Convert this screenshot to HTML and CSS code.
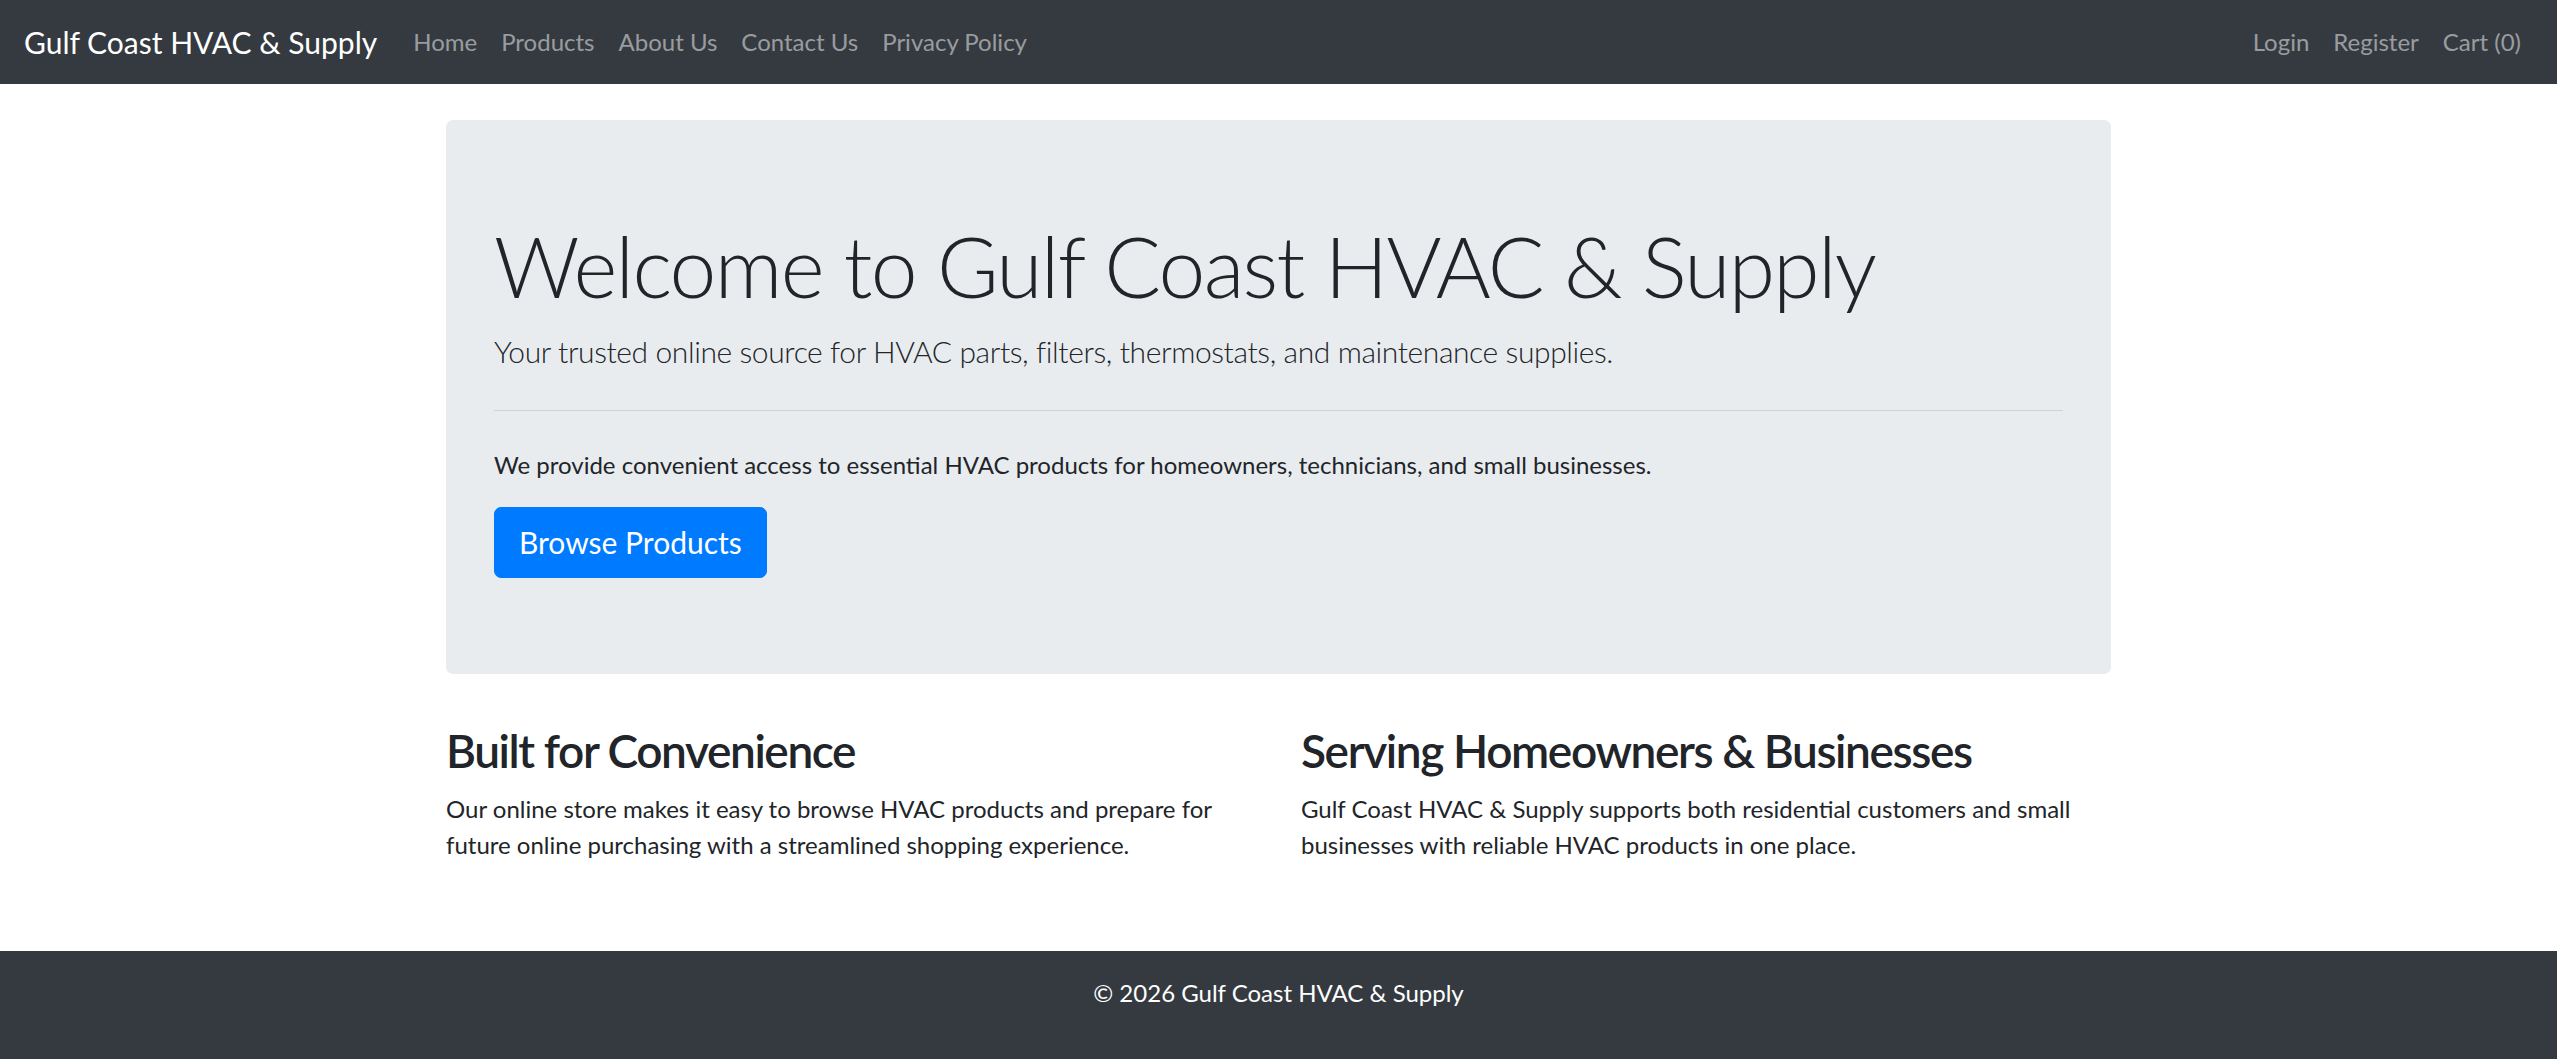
FILE: index.html
```html
<!DOCTYPE html>
<html lang="en">
<head>
  <meta charset="UTF-8">
  <title>Gulf Coast HVAC &amp; Supply</title>
  <link rel="stylesheet" href="styles.css">
</head>
<body>

  <nav class="navbar">
    <div class="nav-left">
      <a class="brand" href="#">Gulf Coast HVAC &amp; Supply</a>
      <a class="nav-link" href="#">Home</a>
      <a class="nav-link" href="#">Products</a>
      <a class="nav-link" href="#">About Us</a>
      <a class="nav-link" href="#">Contact Us</a>
      <a class="nav-link" href="#">Privacy Policy</a>
    </div>
    <div class="nav-right">
      <a class="nav-link" href="#">Login</a>
      <a class="nav-link" href="#">Register</a>
      <a class="nav-link" href="#">Cart (0)</a>
    </div>
  </nav>

  <main class="container">
    <div class="jumbotron">
      <h1 class="display">Welcome to Gulf Coast HVAC &amp; Supply</h1>
      <p class="lead">Your trusted online source for HVAC parts, filters, thermostats, and maintenance supplies.</p>
      <hr>
      <p>We provide convenient access to essential HVAC products for homeowners, technicians, and small businesses.</p>
      <a class="btn" href="#">Browse Products</a>
    </div>

    <div class="features">
      <div class="feature">
        <h2>Built for Convenience</h2>
        <p>Our online store makes it easy to browse HVAC products and prepare for future online purchasing with a streamlined shopping experience.</p>
      </div>
      <div class="feature">
        <h2>Serving Homeowners &amp; Businesses</h2>
        <p>Gulf Coast HVAC &amp; Supply supports both residential customers and small businesses with reliable HVAC products in one place.</p>
      </div>
    </div>
  </main>

  <footer class="footer">
    <p>&copy; 2026 Gulf Coast HVAC &amp; Supply</p>
  </footer>

</body>
</html>
```

FILE: styles.css
```css
body {
  margin: 0;
  font-family: Lato, "Open Sans", sans-serif;
  font-size: 24px;
  line-height: 1.5;
  color: #212529;
  background-color: #fff;
  min-height: 100vh;
  display: flex;
  flex-direction: column;
}

a {
  text-decoration: none;
}

.navbar {
  background-color: #343a40;
  padding: 12px 24px;
  display: flex;
  justify-content: space-between;
  align-items: center;
}

.nav-left, .nav-right {
  display: flex;
  align-items: center;
}

.brand {
  color: #fff;
  font-size: 30px;
  line-height: 45px;
  padding: 7.5px 0;
  margin-right: 24px;
}

.nav-link {
  color: rgba(255,255,255,0.5);
  padding: 12px;
  line-height: 36px;
}

.container {
  width: 1665px;
  margin: 36px auto 0;
  flex: 1;
}

.jumbotron {
  background-color: #e9ecef;
  border-radius: 7px;
  padding: 96px 48px;
  margin-bottom: 48px;
}

.display {
  font-size: 84px;
  font-weight: 300;
  line-height: 1.2;
  letter-spacing: -1.7px;
  margin: 0 0 12px;
}

.lead {
  font-size: 30px;
  font-weight: 300;
  letter-spacing: -0.4px;
  margin: 0;
}

hr {
  border: 0;
  border-top: 1px solid rgba(0,0,0,0.1);
  margin: 36px 0;
}

.jumbotron p {
  margin-top: 0;
  margin-bottom: 24px;
}

.btn {
  display: inline-block;
  background-color: #007bff;
  color: #fff;
  font-size: 30px;
  line-height: 45px;
  padding: 12px 24px;
  border: 1px solid #007bff;
  border-radius: 7px;
}

.features {
  display: grid;
  grid-template-columns: 1fr 1fr;
  gap: 45px;
}

.feature h2 {
  font-size: 46px;
  font-weight: 600;
  line-height: 57.6px;
  letter-spacing: -1.4px;
  margin: 0 0 12px;
}

.feature p {
  margin: 0 0 24px;
}

.footer {
  background-color: #343a40;
  color: #fff;
  text-align: center;
  padding: 24px 0 48px;
}

.footer p {
  margin: 0;
}
```
